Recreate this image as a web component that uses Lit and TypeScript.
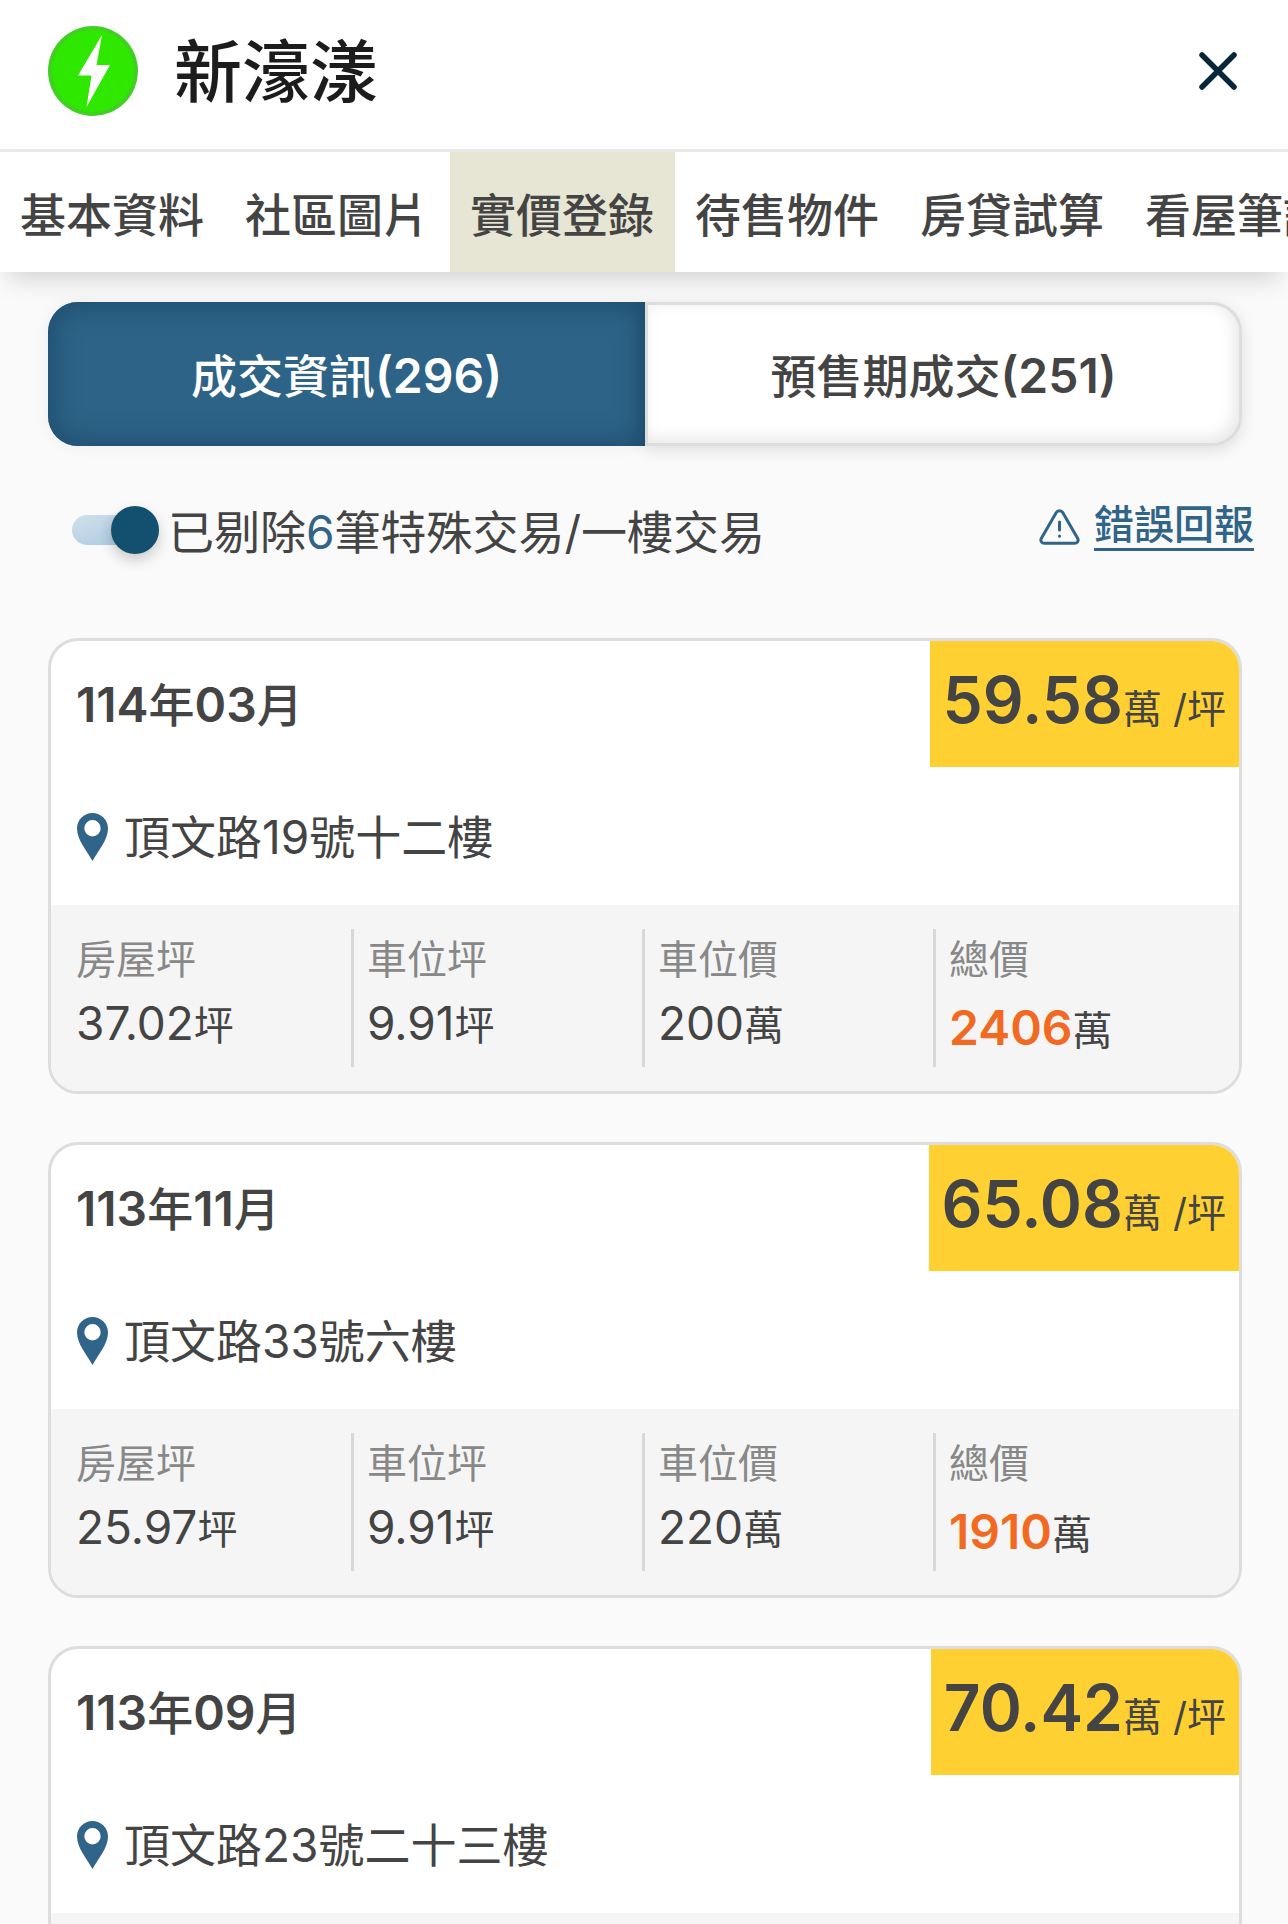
import { LitElement, html, css } from "lit";
import { customElement, property, state } from "lit/decorators.js";
import { classMap } from "lit/directives/class-map.js";

interface Stat {
  label: string;
  value: string;
  unit: string;
  total?: boolean;
}

interface Deal {
  date: string;
  price: string;
  address: string;
  stats: Stat[];
}

const TABS = ["基本資料", "社區圖片", "實價登錄", "待售物件", "房貸試算", "看屋筆記"];

const SEGMENTS = ["成交資訊(296)", "預售期成交(251)"];

const DEALS: Deal[] = [
  {
    date: "114年03月",
    price: "59.58",
    address: "頂文路19號十二樓",
    stats: [
      { label: "房屋坪", value: "37.02", unit: "坪" },
      { label: "車位坪", value: "9.91", unit: "坪" },
      { label: "車位價", value: "200", unit: "萬" },
      { label: "總價", value: "2406", unit: "萬", total: true },
    ],
  },
  {
    date: "113年11月",
    price: "65.08",
    address: "頂文路33號六樓",
    stats: [
      { label: "房屋坪", value: "25.97", unit: "坪" },
      { label: "車位坪", value: "9.91", unit: "坪" },
      { label: "車位價", value: "220", unit: "萬" },
      { label: "總價", value: "1910", unit: "萬", total: true },
    ],
  },
  { date: "113年09月", price: "70.42", address: "頂文路23號二十三樓", stats: [] },
];

/** Wraps runs of digits and brackets so that they can be set larger and bolder than the Han text. */
const mixed = (text: string) =>
  text
    .split(/([\d()]+)/)
    .filter(Boolean)
    .map((part) => (/^[\d()]/.test(part) ? html`<span class="num">${part}</span>` : part));

@customElement("deal-card")
class DealCard extends LitElement {
  @property({ attribute: false }) deal!: Deal;

  static styles = css`
    :host {
      display: block;
      flex: none;
    }
    .card {
      box-sizing: border-box;
      border: 3px solid #ddd;
      border-radius: 30px;
      background: #fff;
      overflow: hidden;
    }
    .top {
      display: flex;
      justify-content: space-between;
      align-items: flex-start;
    }
    .date {
      margin: 0;
      padding: 32px 0 0 25px;
      font-size: 46px;
      line-height: 64px;
      font-weight: 500;
    }
    .date .num {
      font-size: 48px;
      font-weight: 600;
    }
    .price {
      box-sizing: border-box;
      height: 126px;
      margin: 0;
      padding: 17px 13px 0;
      background: #ffd032;
      white-space: pre;
      line-height: 84px;
    }
    .amount {
      font-size: 64px;
      font-weight: 600;
    }
    .per {
      font-size: 39px;
    }
    .address {
      display: flex;
      align-items: center;
      gap: 16px;
      margin: 0;
      padding: 38px 25px 36px 26px;
      font-size: 46px;
      line-height: 64px;
    }
    .pin {
      flex: none;
      width: 31px;
      height: 48px;
    }
    .stats {
      display: grid;
      grid-template-columns: repeat(4, 1fr);
      min-height: 138px;
      margin: 0;
      padding: 24px 12px;
      background: #f5f5f5;
    }
    .stat {
      box-sizing: border-box;
      height: 138px;
      padding: 0 0 0 13px;
      border-right: 3px solid #d8d8d8;
    }
    .stat:last-child {
      border-right: 0;
    }
    .label {
      padding-top: 1px;
      font-size: 40px;
      line-height: 60px;
      color: #888;
    }
    .value {
      margin: 0;
      font-size: 46px;
      line-height: 66px;
      white-space: nowrap;
    }
    .unit {
      font-size: 40px;
    }
    .total {
      padding-top: 5px;
    }
    .total .number {
      font-size: 48px;
      font-weight: 600;
      color: #f26a21;
    }
  `;

  render() {
    const d = this.deal;
    return html`
      <article class="card">
        <div class="top">
          <h2 class="date">${mixed(d.date)}</h2>
          <p class="price"><span class="amount">${d.price}</span><span class="per">萬 /坪</span></p>
        </div>
        <p class="address">
          <svg class="pin" viewBox="0 0 31 48" aria-hidden="true">
            <path
              fill="#306488"
              fill-rule="evenodd"
              d="M15.500 0C6.900 0 0 6.900 0 15.500C0 27 10 38 15.500 48C21 38 31 27 31 15.500C31 6.900 24.100 0 15.500 0ZM15.500 7a8.200 8.200 0 1 1 0 16.400a8.200 8.200 0 0 1 0-16.400Z"
            />
          </svg>
          <span>${d.address}</span>
        </p>
        <dl class="stats">
          ${d.stats.map(
            (s) => html`
              <div class="stat">
                <dt class="label">${s.label}</dt>
                <dd class=${classMap({ value: true, total: !!s.total })}><span class="number">${s.value}</span><span class="unit">${s.unit}</span></dd>
              </div>
            `
          )}
        </dl>
      </article>
    `;
  }
}

@customElement("app-root")
class AppRoot extends LitElement {
  @state() private tab = 2;
  @state() private segment = 0;
  @state() private filtered = true;

  static styles = css`
    :host {
      display: flex;
      flex-direction: column;
      height: 100vh;
      overflow: hidden;
      background: #fafafa;
      color: #444;
      font-family: Inter, "Noto Sans CJK TC", sans-serif;
    }
    button {
      margin: 0;
      border: 0;
      background: none;
      font: inherit;
      color: inherit;
      cursor: pointer;
    }
    .header {
      flex: none;
      display: flex;
      align-items: center;
      gap: 36px;
      padding: 26px 48px 33px;
      background: #fff;
      border-bottom: 3px solid #eaeaea;
    }
    .logo {
      flex: none;
      width: 90px;
      height: 90px;
    }
    .title {
      flex: 1;
      margin: 0;
      padding-top: 2px;
      font-size: 68px;
      line-height: 88px;
      font-weight: 500;
      color: #1c1c1c;
    }
    .close {
      flex: none;
      display: flex;
      padding: 0;
    }
    .close svg {
      width: 44px;
      height: 44px;
    }
    .bar {
      flex: none;
      z-index: 1;
      box-shadow: 0 14px 24px -8px rgba(0, 0, 0, 0.17);
    }
    .tabs {
      display: flex;
      overflow: hidden;
      background: #fff;
    }
    .tab {
      flex: none;
      height: 120px;
      padding: 6px 21px 0 20px;
      font-size: 46px;
      line-height: 64px;
      font-weight: 500;
      white-space: nowrap;
    }
    .tab.active {
      background: #e7e5d3;
    }
    .segments {
      flex: none;
      display: grid;
      grid-template-columns: 1fr 1fr;
      margin: 30px 46px 0 48px;
    }
    .segment {
      box-sizing: border-box;
      height: 144px;
      padding: 4px 0 0;
      border: 3px solid #ddd;
      background: #fff;
      font-size: 46px;
      line-height: 64px;
      font-weight: 500;
      box-shadow: 0 4px 16px rgba(0, 0, 0, 0.12), inset -4px -4px 16px rgba(0, 0, 0, 0.1);
    }
    .segment .num {
      font-size: 48px;
      font-weight: 600;
    }
    .segment:first-child {
      border-radius: 30px 0 0 30px;
    }
    .segment:last-child {
      border-radius: 0 30px 30px 0;
    }
    .segment.active {
      border: 0;
      background: #2d6386;
      color: #fff;
      box-shadow: 0 0 16px rgba(0, 0, 0, 0.06), inset 0 0 24px 6px #1f4f73;
    }
    .tools {
      flex: none;
      display: flex;
      align-items: flex-start;
      justify-content: space-between;
      padding: 50px 34px 74px 72px;
    }
    .filter {
      display: flex;
      align-items: center;
      gap: 9px;
      font-size: 46px;
      line-height: 64px;
    }
    .caption {
      padding-top: 4px;
    }
    .count {
      color: #306488;
    }
    .switch {
      appearance: none;
      flex: none;
      display: flex;
      align-items: center;
      width: 87px;
      height: 30px;
      margin: 0;
      border-radius: 15px;
      background: linear-gradient(160deg, #d0e0ec, #a5c6dc);
      cursor: pointer;
    }
    .switch::before {
      content: "";
      width: 48px;
      height: 48px;
      border-radius: 50%;
      background: #134f6e;
      box-shadow: 0 6px 14px rgba(0, 0, 0, 0.2);
    }
    .switch:checked::before {
      margin-left: auto;
    }
    .report {
      display: flex;
      align-items: center;
      gap: 14px;
      margin-top: 6px;
      font-size: 40px;
      line-height: 46px;
      font-weight: 500;
      color: #306488;
      text-decoration: none;
    }
    .report svg {
      width: 41px;
      height: 36px;
    }
    .report span {
      border-bottom: 3px solid #306488;
    }
    .list {
      flex: 1;
      display: flex;
      flex-direction: column;
      gap: 48px;
      min-height: 0;
      padding: 0 46px 0 48px;
      overflow: hidden;
    }
  `;

  render() {
    return html`
      <header class="header">
        <svg class="logo" viewBox="0 0 90 90" aria-hidden="true">
          <circle cx="45" cy="45" r="45" fill="#3fd022" />
          <circle cx="45" cy="45" r="41" fill="#2fe800" />
          <path fill="#fff" d="M54 9L30 49.500H43.500L38.500 81L62 39H48.500Z" />
        </svg>
        <h1 class="title">新濠漾</h1>
        <button class="close" type="button" aria-label="關閉">
          <svg viewBox="0 0 44 44" aria-hidden="true">
            <path d="M6 6L38 38M38 6L6 38" stroke="#08263b" stroke-width="5.500" stroke-linecap="round" />
          </svg>
        </button>
      </header>
      <div class="bar">
        <nav class="tabs">
          ${TABS.map(
            (t, i) => html`<button
              type="button"
              class=${classMap({ tab: true, active: i === this.tab })}
              @click=${() => (this.tab = i)}
            >${t}</button>`
          )}
        </nav>
      </div>
      <div class="segments">
        ${SEGMENTS.map(
          (s, i) => html`<button
            type="button"
            class=${classMap({ segment: true, active: i === this.segment })}
            aria-pressed=${i === this.segment ? "true" : "false"}
            @click=${() => (this.segment = i)}
          >${mixed(s)}</button>`
        )}
      </div>
      <div class="tools">
        <label class="filter" for="filter">
          <input
            id="filter"
            class="switch"
            type="checkbox"
            .checked=${this.filtered}
            @change=${(e: Event) => (this.filtered = (e.target as HTMLInputElement).checked)}
          />
          <span class="caption">已剔除<span class="count">6</span>筆特殊交易/一樓交易</span>
        </label>
        <a class="report" href="#report">
          <svg viewBox="0 0 41 36" fill="none" stroke="#306488" stroke-width="3" stroke-linecap="round" stroke-linejoin="round" aria-hidden="true">
            <path d="M17.300 3.600L2.400 29.200C1 31.800 2.600 34.300 5.400 34.300H35.600C38.400 34.300 40 31.800 38.600 29.200L23.700 3.600C22.300 1.200 18.700 1.200 17.300 3.600Z" />
            <path d="M20.500 13V21M20.500 27V27.200" />
          </svg>
          <span>錯誤回報</span>
        </a>
      </div>
      <main class="list">
        ${DEALS.map((d) => html`<deal-card .deal=${d}></deal-card>`)}
      </main>
    `;
  }
}
